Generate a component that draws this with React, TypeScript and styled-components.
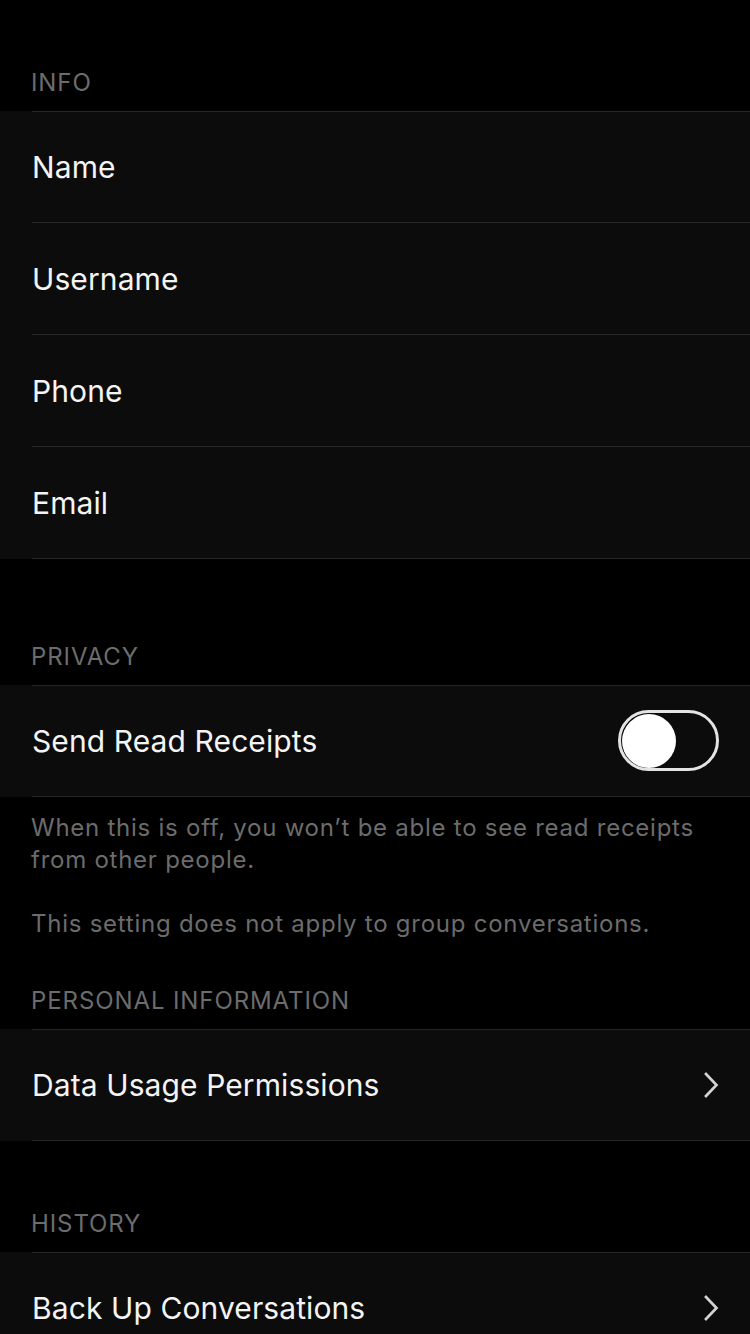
import React from "react";
import styled, { createGlobalStyle } from "styled-components";

const Global = createGlobalStyle`
  html, body {
    margin: 0;
    padding: 0;
    background: #000;
  }
  body {
    font-family: Inter, "Noto Sans", Roboto, sans-serif;
    -webkit-font-smoothing: antialiased;
  }
`;

const Page = styled.div`
  width: 750px;
  min-height: 1334px;
  background: #000;
  display: flex;
  flex-direction: column;
  padding-bottom: 80px;
`;

const Header = styled.div<{ $top: number }>`
  margin-top: ${(p) => p.$top}px;
  padding: 0 31px 12px;
  font-size: 24px;
  line-height: 32px;
  color: #6c6c6c;
  text-transform: uppercase;
  letter-spacing: 0.9px;
`;

const Group = styled.div`
  display: flex;
  flex-direction: column;
  position: relative;
  &::before {
    content: "";
    position: absolute;
    top: 0;
    left: 32px;
    right: 0;
    height: 1px;
    background: #262626;
  }
`;

const Row = styled.div`
  height: 111px;
  background: #0c0c0c;
  display: flex;
  align-items: center;
  justify-content: space-between;
  padding: 0 31px 0 32px;
  box-sizing: border-box;
`;

const Separator = styled.div`
  height: 1px;
  background: #0c0c0c;
  display: flex;
  &::after {
    content: "";
    flex: 1;
    margin-left: 32px;
    background: #262626;
  }
`;

const Label = styled.span`
  font-size: 30px;
  color: #f4f4f4;
  letter-spacing: 0.1px;
`;

const Footer = styled.div`
  padding: 15px 31px 0;
  font-size: 24px;
  line-height: 32px;
  color: #6c6c6c;
  letter-spacing: 0.75px;
  display: flex;
  flex-direction: column;
  gap: 32px;
`;

const Toggle = styled.div<{ $on: boolean }>`
  width: 101px;
  height: 61px;
  box-sizing: border-box;
  border-radius: 31px;
  border: 3px solid #e4e4e4;
  background: ${(p) => (p.$on ? "#4cd964" : "#0c0c0c")};
  display: flex;
  align-items: center;
  justify-content: ${(p) => (p.$on ? "flex-end" : "flex-start")};
  padding: 0 1px;
`;

const Knob = styled.div`
  width: 54px;
  height: 54px;
  border-radius: 50%;
  background: #fff;
`;

const Chevron = () => (
  <svg width="16" height="26" viewBox="0 0 16 26" fill="none">
    <path
      d="M3 2 L13.5 13 L3 24"
      stroke="#d2d2d2"
      strokeWidth="2.7"
      strokeLinecap="square"
      strokeLinejoin="miter"
    />
  </svg>
);

type Item = { label: string; kind?: "chevron" | "toggle" };

const List: React.FC<{ items: Item[] }> = ({ items }) => (
  <Group>
    {items.map((it) => (
      <React.Fragment key={it.label}>
        <Row>
          <Label>{it.label}</Label>
          {it.kind === "chevron" && <Chevron />}
          {it.kind === "toggle" && (
            <Toggle $on={false}>
              <Knob />
            </Toggle>
          )}
        </Row>
        <Separator />
      </React.Fragment>
    ))}
  </Group>
);

export default function App() {
  return (
    <>
      <Global />
      <Page>
        <Header $top={67}>Info</Header>
        <List
          items={[
            { label: "Name" },
            { label: "Username" },
            { label: "Phone" },
            { label: "Email" },
          ]}
        />
        <Header $top={82}>Privacy</Header>
        <List items={[{ label: "Send Read Receipts", kind: "toggle" }]} />
        <Footer>
          <span>
            When this is off, you won’t be able to see read receipts
            <br />
            from other people.
          </span>
          <span>This setting does not apply to group conversations.</span>
        </Footer>
        <Header $top={45}>Personal Information</Header>
        <List items={[{ label: "Data Usage Permissions", kind: "chevron" }]} />
        <Header $top={67}>History</Header>
        <List items={[{ label: "Back Up Conversations", kind: "chevron" }]} />
      </Page>
    </>
  );
}
